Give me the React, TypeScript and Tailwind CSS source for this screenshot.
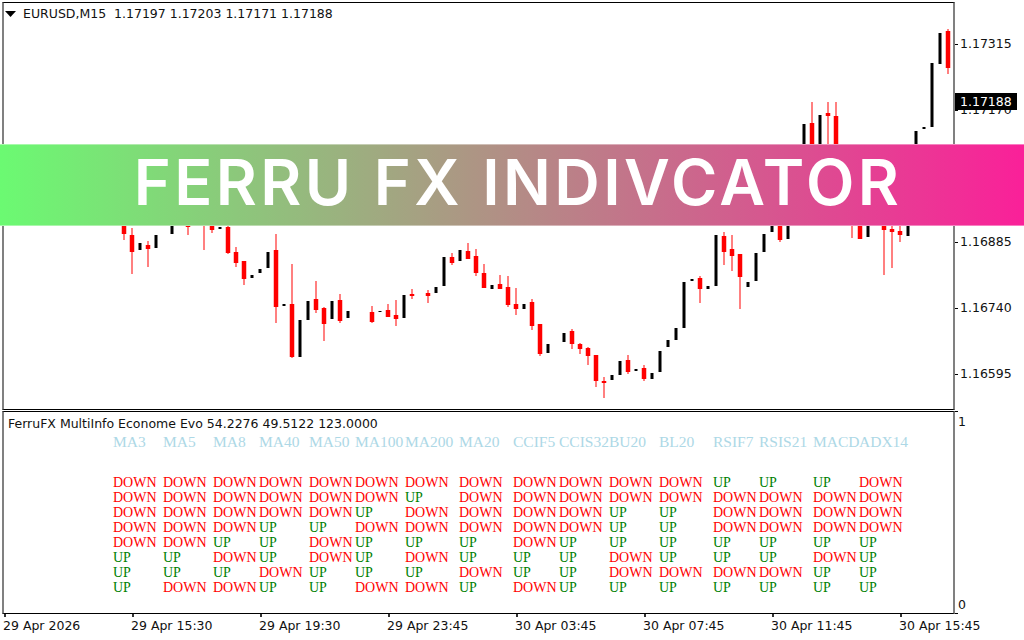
const UI_FONT = "font-['DejaVu_Sans',sans-serif] text-[12.5px] leading-[14px] text-[#111]";

// x, body top, body bottom, wick top, wick bottom, up
type Candle = [number, number, number, number?, number?, boolean?];

const candles: Candle[] = [
  [124, 150, 234, 150, 240],
  [132, 235, 252, 228, 274],
  [140, 243, 250, 243, 250, true],
  [148, 245, 249, 241, 267],
  [156, 235, 248, 235, 248, true],
  [172, 215, 234, 215, 234, true],
  [188, 220, 227, 220, 235],
  [196, 224, 226, 224, 226, true],
  [204, 215, 222, 215, 250],
  [212, 215, 230, 215, 233],
  [220, 227, 229, 227, 229, true],
  [228, 227, 253, 222, 254],
  [236, 252, 263, 247, 267],
  [244, 261, 279, 261, 285],
  [252, 275, 278, 275, 278, true],
  [260, 269, 273, 269, 273, true],
  [268, 252, 268, 252, 268, true],
  [276, 250, 307, 234, 323],
  [284, 304, 306, 304, 306, true],
  [292, 304, 357, 264, 358],
  [300, 320, 357, 320, 357, true],
  [308, 301, 320, 301, 320, true],
  [316, 299, 310, 281, 313],
  [324, 308, 324, 307, 341],
  [332, 301, 319, 301, 319, true],
  [340, 300, 321, 294, 323],
  [348, 311, 318, 311, 318, true],
  [372, 312, 322, 306, 323],
  [380, 311, 312, 311, 312, true],
  [388, 310, 317, 304, 317],
  [396, 315, 319, 300, 326],
  [404, 295, 318, 295, 318, true],
  [412, 294, 296, 289, 299],
  [428, 293, 296, 290, 303],
  [436, 287, 293, 287, 293, true],
  [444, 257, 286, 257, 286, true],
  [452, 257, 263, 253, 265],
  [460, 250, 261, 250, 261, true],
  [468, 251, 259, 243, 259],
  [476, 256, 273, 249, 276],
  [484, 273, 288, 264, 288],
  [492, 285, 289, 285, 289, true],
  [500, 284, 289, 275, 289],
  [508, 287, 305, 276, 307],
  [516, 304, 309, 288, 315],
  [524, 304, 309, 304, 309, true],
  [532, 302, 326, 299, 330],
  [540, 324, 354, 324, 356],
  [548, 344, 353, 344, 353, true],
  [564, 333, 342, 333, 342, true],
  [572, 331, 344, 329, 349],
  [580, 344, 349, 343, 354],
  [588, 348, 356, 347, 365],
  [596, 355, 381, 355, 387],
  [604, 381, 383, 377, 398],
  [612, 375, 380, 375, 380, true],
  [620, 361, 375, 361, 375, true],
  [628, 360, 372, 355, 374],
  [636, 369, 371, 369, 371, true],
  [644, 368, 379, 365, 381],
  [652, 373, 379, 373, 379, true],
  [660, 351, 372, 351, 372, true],
  [668, 340, 347, 340, 347, true],
  [676, 328, 340, 328, 340, true],
  [684, 282, 328, 282, 328, true],
  [692, 279, 281, 279, 281, true],
  [700, 278, 289, 276, 303],
  [708, 286, 289, 286, 289, true],
  [716, 235, 286, 235, 286, true],
  [724, 236, 252, 232, 265],
  [732, 249, 256, 235, 271],
  [740, 254, 277, 254, 309],
  [748, 282, 287, 282, 287, true],
  [756, 253, 281, 253, 281, true],
  [764, 234, 252, 234, 252, true],
  [772, 215, 232, 215, 232, true],
  [780, 215, 240, 215, 242],
  [788, 215, 239, 215, 239, true],
  [804, 124, 200, 124, 200, true],
  [812, 123, 200, 102, 200],
  [820, 115, 200, 115, 200, true],
  [828, 113, 116, 102, 200],
  [836, 116, 200, 102, 200],
  [852, 200, 210, 200, 238],
  [860, 200, 239, 200, 239],
  [868, 200, 237, 200, 237, true],
  [884, 200, 230, 200, 275],
  [892, 229, 232, 200, 268],
  [900, 231, 235, 200, 242],
  [908, 200, 236, 200, 236, true],
  [916, 131, 200, 131, 200, true],
  [924, 127, 129, 127, 129, true],
  [932, 63, 127, 63, 127, true],
  [940, 33, 64, 33, 64, true],
  [948, 31, 68, 29, 74],
];

const prices = ["1.17315", "1.17170", "1.17025", "1.16885", "1.16740", "1.16595"];
const times = [
  "29 Apr 2026",
  "29 Apr 15:30",
  "29 Apr 19:30",
  "29 Apr 23:45",
  "30 Apr 03:45",
  "30 Apr 07:45",
  "30 Apr 11:45",
  "30 Apr 15:45",
];

const columns = [
  { name: "MA3", rows: "DDDDDUUU" },
  { name: "MA5", rows: "DDDDDUUD" },
  { name: "MA8", rows: "DDDDUDUD" },
  { name: "MA40", rows: "DDDUUUDU" },
  { name: "MA50", rows: "DDDUDDUU" },
  { name: "MA100", rows: "DDUDUUUD" },
  { name: "MA200", rows: "DUDDUDUD" },
  { name: "MA20", rows: "DDDDUUDU" },
  { name: "CCIF5", rows: "DDDDDUUD" },
  { name: "CCIS32", rows: "DDDDUUUU" },
  { name: "BU20", rows: "DDUUUDDU" },
  { name: "BL20", rows: "DDUUUUDU" },
  { name: "RSIF7", rows: "UDDDUUDU" },
  { name: "RSIS21", rows: "UDDDUUDU" },
  { name: "MACD", rows: "UDDDUDUU" },
  { name: "ADX14", rows: "DDDDUUUU" },
];

function CandleChart() {
  return (
    <svg viewBox="4 3 949 406" width={949} height={406} className="block">
      {candles.map(([x, top, bottom, wickTop, wickBottom, up]) =>
        up ? (
          <rect key={x} x={x - 1.5} y={top} width={3} height={bottom - top} fill="#000" />
        ) : (
          <g key={x}>
            <rect x={x - 1} y={wickTop} width={2} height={(wickBottom ?? bottom) - (wickTop ?? top)} fill="#ff8080" />
            <rect x={x - 2.25} y={top} width={4.5} height={bottom - top} fill="#ff0000" />
          </g>
        )
      )}
    </svg>
  );
}

function IndicatorTable() {
  return (
    <div className="ml-[109px] grid grid-cols-[50px_50px_46px_50px_46px_50px_54px_54px_46px_50px_50px_54px_46px_54px_46px_50px] font-['Liberation_Serif',serif] text-[14px] leading-[15px] whitespace-nowrap">
      {columns.map((col) => (
        <div key={col.name} className="flex flex-col">
          <div className="mb-[26px] text-[15.5px] text-[#add8e6]">{col.name}</div>
          {col.rows.split("").map((r, i) => (
            <div key={i} className={r === "D" ? "text-[#ff0000]" : "text-[#008000]"}>
              {r === "D" ? "DOWN" : "UP"}
            </div>
          ))}
        </div>
      ))}
    </div>
  );
}

export default function App() {
  return (
    <div className={`relative w-[1024px] h-[640px] overflow-hidden bg-white pt-[2px] ${UI_FONT}`}>
      <div className="flex h-[408px] pl-[2px]">
        <div className="relative w-[953px] border-x-2 border-x-[#808080] border-y border-y-black">
          <CandleChart />
          <div className="absolute left-[1px] top-[4px] flex items-center gap-[7px]">
            <svg width="11" height="6" viewBox="0 0 11 6">
              <path d="M0 0h11L5.5 6z" fill="#000" />
            </svg>
            <span className="whitespace-pre">EURUSD,M15  1.17197 1.17203 1.17171 1.17188</span>
          </div>
        </div>
        <div className="relative flex-1 pt-[9px]">
          {prices.map((p) => (
            <div key={p} className="flex h-[66px] items-center gap-[2px]">
              <div className="h-px w-[3px] bg-black" />
              <span>{p}</span>
            </div>
          ))}
          <div className="absolute left-0 top-[91px] flex h-[17px] w-[62px] items-center bg-black pl-[5px] text-white">
            1.17188
          </div>
        </div>
      </div>

      <div className="mt-px flex h-[203px] pl-[2px]">
        <div className="w-[953px] border-x-2 border-x-[#808080] border-y border-y-black">
          <div className="pl-[4px] pt-[5px]">FerruFX MultiInfo Econome Evo 54.2276 49.5122 123.0000</div>
          <div className="mt-[3px]">
            <IndicatorTable />
          </div>
        </div>
        <div className="flex flex-1 flex-col">
          <div className="h-px w-[3px] bg-black" />
          <div className="flex flex-1 flex-col justify-between pb-[1px] pl-[3px] pt-[3px]">
            <span>1</span>
            <span>0</span>
          </div>
          <div className="h-px w-[3px] bg-black" />
        </div>
      </div>

      <div className="ml-[4px] grid grid-cols-[repeat(8,128px)]">
        {times.map((t) => (
          <div key={t} className="flex flex-col">
            <div className="h-[3px] w-[2px] bg-[#333]" />
            <span className="-ml-[1px] mt-[2px] whitespace-nowrap">{t}</span>
          </div>
        ))}
      </div>

      <div className="absolute inset-x-0 top-[144px] flex h-[82px] items-center justify-center border-y border-y-white/40 bg-[linear-gradient(to_right,#6bfa72,#fa2099)] pb-[5px] pl-[12px] font-['Inter',sans-serif] text-[63px] font-semibold leading-none tracking-[3.4px] text-white">
        FERRU FX INDIVCATOR
      </div>
    </div>
  );
}
